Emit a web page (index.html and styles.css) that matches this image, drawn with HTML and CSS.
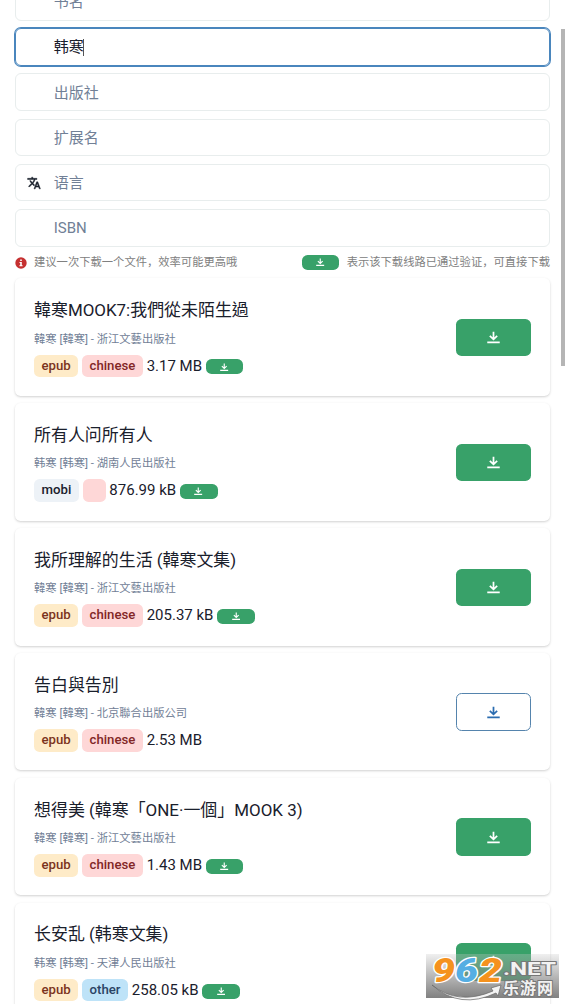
FILE: index.html
```html
<!DOCTYPE html>
<html lang="zh-CN">
<head>
<meta charset="utf-8">
<title>图书搜索</title>
<link rel="stylesheet" href="styles.css">
</head>
<body>
<svg class="defs" width="0" height="0">
  <symbol id="save" viewBox="0 0 24 24"><path fill="none" stroke="currentColor" stroke-width="3.2" d="M12 1.5v13M5.2 9l6.8 6.4L18.8 9M.5 21h23"/></symbol>
  <symbol id="translate" viewBox="0 0 24 24"><path fill="currentColor" stroke="currentColor" stroke-width=".8" d="M12.87 15.07l-2.54-2.51.03-.03A17.52 17.52 0 0 0 14.07 6H17V4h-7V2H8v2H1v2h11.17C11.5 7.92 10.44 9.75 9 11.35 8.07 10.32 7.3 9.19 6.69 8h-2c.73 1.63 1.73 3.17 2.98 4.56l-5.09 5.02L4 19l5-5 3.11 3.11.76-2.04zM18.5 10h-2L12 22h2l1.12-3h4.75L21 22h2l-4.5-12zm-2.62 7l1.62-4.33L19.12 17h-3.24z"/></symbol>
</svg>
<main class="page">
  <form class="filters">
    <div class="field">书名</div>
    <div class="field focused">韩寒<span class="caret"></span></div>
    <div class="field">出版社</div>
    <div class="field">扩展名</div>
    <div class="field"><svg class="field-icon"><use href="#translate"/></svg>语言</div>
    <div class="field latin">ISBN</div>
  </form>
  <div class="hints">
    <div class="hint"><span class="info"><svg viewBox="0 0 12 12"><circle cx="6" cy="6" r="5.7" fill="#c53030"/><path fill="#fff" d="M5.2 2.6h1.6v1.5H5.2zM4.5 5h2.3v3.2h.8v1.1H4.4V8.2h.8V6.1h-.7z"/></svg></span>建议一次下载一个文件，效率可能更高哦</div>
    <div class="hint"><span class="verified"><svg><use href="#save"/></svg></span>表示该下载线路已通过验证，可直接下载</div>
  </div>
  <section class="results">
    <article class="card">
      <div class="book">
        <h2 class="title" lang="zh-TW">韓寒MOOK7:我們從未陌生過</h2>
        <p class="meta" lang="zh-TW">韓寒 [韓寒] - 浙江文藝出版社</p>
        <div class="tags"><span class="tag orange">epub</span><span class="tag red">chinese</span><span class="size">3.17 MB</span><span class="verified"><svg><use href="#save"/></svg></span></div>
      </div>
      <div class="button"><svg><use href="#save"/></svg></div>
    </article>
    <article class="card">
      <div class="book">
        <h2 class="title">所有人问所有人</h2>
        <p class="meta">韩寒 [韩寒] - 湖南人民出版社</p>
        <div class="tags"><span class="tag gray">mobi</span><span class="tag red blank"></span><span class="size">876.99 kB</span><span class="verified"><svg><use href="#save"/></svg></span></div>
      </div>
      <div class="button"><svg><use href="#save"/></svg></div>
    </article>
    <article class="card">
      <div class="book">
        <h2 class="title">我所理解的生活 (韓寒文集)</h2>
        <p class="meta">韓寒 [韓寒] - 浙江文藝出版社</p>
        <div class="tags"><span class="tag orange">epub</span><span class="tag red">chinese</span><span class="size">205.37 kB</span><span class="verified"><svg><use href="#save"/></svg></span></div>
      </div>
      <div class="button"><svg><use href="#save"/></svg></div>
    </article>
    <article class="card">
      <div class="book">
        <h2 class="title">告白與告別</h2>
        <p class="meta">韓寒 [韓寒] - 北京聯合出版公司</p>
        <div class="tags"><span class="tag orange">epub</span><span class="tag red">chinese</span><span class="size">2.53 MB</span></div>
      </div>
      <div class="button outline"><svg><use href="#save"/></svg></div>
    </article>
    <article class="card">
      <div class="book">
        <h2 class="title">想得美 (韓寒「ONE·一個」MOOK 3)</h2>
        <p class="meta">韓寒 [韓寒] - 浙江文藝出版社</p>
        <div class="tags"><span class="tag orange">epub</span><span class="tag red">chinese</span><span class="size">1.43 MB</span><span class="verified"><svg><use href="#save"/></svg></span></div>
      </div>
      <div class="button"><svg><use href="#save"/></svg></div>
    </article>
    <article class="card">
      <div class="book">
        <h2 class="title">长安乱 (韩寒文集)</h2>
        <p class="meta">韩寒 [韩寒] - 天津人民出版社</p>
        <div class="tags"><span class="tag orange">epub</span><span class="tag blue">other</span><span class="size">258.05 kB</span><span class="verified"><svg><use href="#save"/></svg></span></div>
      </div>
      <div class="button"><svg><use href="#save"/></svg></div>
    </article>
  </section>
</main>
<div class="scrollbar"></div>
<div class="watermark">
  <svg viewBox="0 0 133 44" width="133" height="44">
    <path d="M6 31Q32 52 67 37l-2-3 10-3-3 11-2-3Q34 56 6 31z" fill="#f4f4f4" stroke="#666" stroke-width=".7"/>
    <g class="wm-digits">
      <text x="6" y="28" textLength="23" lengthAdjust="spacingAndGlyphs" fill="#f5921e">9</text>
      <text x="29" y="28" textLength="23" lengthAdjust="spacingAndGlyphs" fill="#55aee3">6</text>
      <text x="53" y="28" textLength="23" lengthAdjust="spacingAndGlyphs" fill="#f5921e">2</text>
    </g>
    <text class="wm-net" x="77" y="21" textLength="53" lengthAdjust="spacingAndGlyphs">.NET</text>
    <text class="wm-cn" x="77" y="39.5" textLength="50">乐游网</text>
  </svg>
</div>
</body>
</html>
```
FILE: styles.css
```css
* { box-sizing: border-box; }
html { height: 100%; overflow: hidden; }
body {
  position: relative;
  height: 1004px;
  margin: 0;
  overflow: hidden;
  background: #fff;
  color: #1a202c;
  font: 15px/22.6px Roboto, "Noto Sans CJK SC", sans-serif;
}
.defs { position: absolute; }
.page { width: 535px; margin: -17.2px 0 0 15px; display: flow-root; }
.filters { display: flex; flex-direction: column; gap: 7.56px; }
.field {
  position: relative;
  height: 37.7px;
  padding: 1.6px 0 0 37.7px;
  display: flex;
  align-items: center;
  border: 1px solid #e8eded;
  border-radius: 6px;
  color: #718096;
}
.latin { padding-top: 0; }
.focused { border-color: #4a86bd; box-shadow: 0 0 0 1px #4a86bd; color: #1a202c; }
.caret { width: 1px; height: 17px; background: #555; margin-left: -1px; }
.field-icon { position: absolute; left: 11px; top: 11px; width: 14px; height: 14px; color: #1a202c; }
.hints {
  display: flex;
  justify-content: space-between;
  height: 31.8px;
  padding-bottom: 1px;
  align-items: center;
  font-size: 11.3px;
  line-height: 17px;
  color: #808080;
}
.hint { display: flex; align-items: center; white-space: nowrap; }
.info { display: flex; width: 12px; height: 12px; margin: 1px 7px 0 0; }
.info svg { width: 12px; height: 12px; }
.verified {
  display: flex;
  align-items: center;
  justify-content: center;
  width: 37.6px;
  height: 15px;
  border-radius: 5.6px;
  background: #38a169;
  color: #fff;
}
.verified svg { width: 8.5px; height: 8.5px; }
.hint .verified { margin: 1px 7.5px 0 0; }
.results { display: flex; flex-direction: column; gap: 7.5px; }
.card {
  height: 117.35px;
  padding: 18.8px 18.8px 18.8px 19px;
  display: flex;
  align-items: center;
  justify-content: space-between;
  border-radius: 5.6px;
  box-shadow: 0 1px 3px rgba(0, 0, 0, .12), 0 1px 2px rgba(0, 0, 0, .07);
}
.book { padding-top: 1px; }
.title { margin: 0; font-size: 16.95px; font-weight: 400; line-height: 25.4px; white-space: nowrap; }
.meta { margin: 7px 0 7px; font-size: 11.3px; line-height: 17px; color: #718096; white-space: nowrap; }
.tags { display: flex; align-items: center; height: 22.6px; }
.tag {
  height: 22.6px;
  padding: 0 7.5px;
  margin-right: 3.8px;
  border-radius: 5.6px;
  font-size: 13.2px;
  font-weight: 500;
  line-height: 22.2px;
}
.blank { width: 23px; }
.orange { background: #feebc8; color: #7b341e; }
.red { background: #fed7d7; color: #822727; }
.gray { background: #edf2f7; color: #1a202c; }
.blue { background: #bee3f8; color: #2a4365; }
.size { margin-right: 3.8px; }
.tags .verified { margin-top: 2px; }
.button {
  display: flex;
  align-items: center;
  justify-content: center;
  width: 75.2px;
  height: 37.6px;
  margin-top: 1px;
  border-radius: 5.6px;
  background: #38a169;
  color: #fff;
}
.button svg { width: 13px; height: 13px; }
.outline { background: #fff; border: 1px solid #5584ad; color: #2b6cb0; }
.scrollbar { position: absolute; left: 561px; top: 29px; width: 4px; height: 337px; background: #b5b5b5; }
.watermark {
  position: absolute;
  left: 426px;
  top: 954px;
  width: 133px;
  height: 44px;
  background: linear-gradient(rgba(205, 205, 205, .3), rgba(115, 115, 115, .9));
}
.watermark svg { display: block; overflow: visible; }
.watermark text { paint-order: stroke; stroke-linejoin: round; }
.wm-digits text { font: italic 900 33px Roboto, sans-serif; stroke: #fff; stroke-width: 2.5px; }
.wm-net { font: bold 18px Roboto, sans-serif; fill: #f2f2f2; stroke: #777; stroke-width: 2px; }
.wm-cn { font: bold 16px "Noto Sans CJK SC", sans-serif; fill: #f2f2f2; stroke: #777; stroke-width: 2px; }
```
